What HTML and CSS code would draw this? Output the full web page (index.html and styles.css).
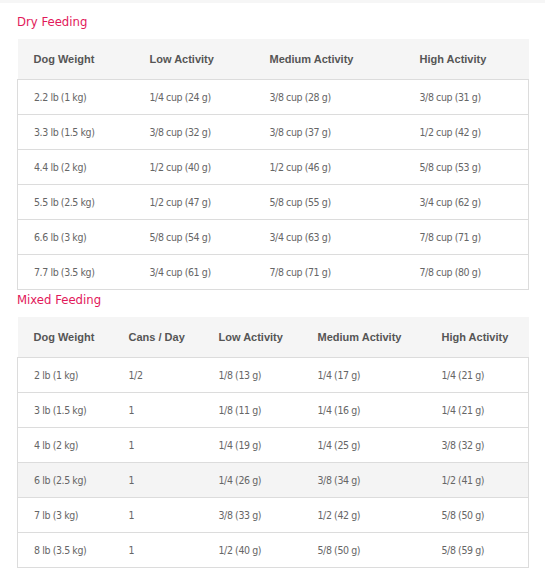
FILE: index.html
```html
<!DOCTYPE html>
<html>
<head>
<meta charset="utf-8">
<link rel="stylesheet" href="styles.css">
</head>
<body>
<div class="topbar"></div>
<div class="content">
  <h2 class="title first">Dry Feeding</h2>
  <table class="feed">
    <colgroup>
      <col class="d1"><col class="d2"><col class="d3"><col class="d4">
    </colgroup>
    <thead>
      <tr><th>Dog Weight</th><th>Low Activity</th><th>Medium Activity</th><th>High Activity</th></tr>
    </thead>
    <tbody>
      <tr><td>2.2 lb (1 kg)</td><td>1/4 cup (24 g)</td><td>3/8 cup (28 g)</td><td>3/8 cup (31 g)</td></tr>
      <tr><td>3.3 lb (1.5 kg)</td><td>3/8 cup (32 g)</td><td>3/8 cup (37 g)</td><td>1/2 cup (42 g)</td></tr>
      <tr><td>4.4 lb (2 kg)</td><td>1/2 cup (40 g)</td><td>1/2 cup (46 g)</td><td>5/8 cup (53 g)</td></tr>
      <tr><td>5.5 lb (2.5 kg)</td><td>1/2 cup (47 g)</td><td>5/8 cup (55 g)</td><td>3/4 cup (62 g)</td></tr>
      <tr><td>6.6 lb (3 kg)</td><td>5/8 cup (54 g)</td><td>3/4 cup (63 g)</td><td>7/8 cup (71 g)</td></tr>
      <tr><td>7.7 lb (3.5 kg)</td><td>3/4 cup (61 g)</td><td>7/8 cup (71 g)</td><td>7/8 cup (80 g)</td></tr>
    </tbody>
  </table>
  <h2 class="title">Mixed Feeding</h2>
  <table class="feed">
    <colgroup>
      <col class="m1"><col class="m2"><col class="m3"><col class="m4"><col class="m5">
    </colgroup>
    <thead>
      <tr><th>Dog Weight</th><th>Cans / Day</th><th>Low Activity</th><th>Medium Activity</th><th>High Activity</th></tr>
    </thead>
    <tbody>
      <tr><td>2 lb (1 kg)</td><td>1/2</td><td>1/8 (13 g)</td><td>1/4 (17 g)</td><td>1/4 (21 g)</td></tr>
      <tr><td>3 lb (1.5 kg)</td><td>1</td><td>1/8 (11 g)</td><td>1/4 (16 g)</td><td>1/4 (21 g)</td></tr>
      <tr><td>4 lb (2 kg)</td><td>1</td><td>1/4 (19 g)</td><td>1/4 (25 g)</td><td>3/8 (32 g)</td></tr>
      <tr class="hover"><td>6 lb (2.5 kg)</td><td>1</td><td>1/4 (26 g)</td><td>3/8 (34 g)</td><td>1/2 (41 g)</td></tr>
      <tr><td>7 lb (3 kg)</td><td>1</td><td>3/8 (33 g)</td><td>1/2 (42 g)</td><td>5/8 (50 g)</td></tr>
      <tr><td>8 lb (3.5 kg)</td><td>1</td><td>1/2 (40 g)</td><td>5/8 (50 g)</td><td>5/8 (59 g)</td></tr>
    </tbody>
  </table>
</div>
</body>
</html>
```
FILE: styles.css
```css
html, body {
  margin: 0;
  padding: 0;
  background: #ffffff;
}

.topbar {
  height: 3px;
  background: #f6f6f6;
}

.content {
  padding: 0 17px;
}

.title {
  margin: 0 0 7px 0;
  font-family: "DejaVu Sans Condensed", "Liberation Sans", sans-serif;
  font-weight: normal;
  font-size: 13px;
  line-height: 20px;
  color: #e2185a;
}

.title.first {
  margin-top: 9px;
}

.feed {
  width: 511px;
  border-collapse: collapse;
  table-layout: fixed;
}

.feed th {
  height: 40px;
  padding: 0 0 0 16px;
  text-align: left;
  background: #f5f5f5;
  border-bottom: 1px solid #dcdcdc;
  font-family: "Liberation Sans", Arial, sans-serif;
  font-weight: bold;
  font-size: 11px;
  color: #555555;
}

.feed td {
  height: 34px;
  padding: 0 0 0 16px;
  border-bottom: 1px solid #dcdcdc;
  font-family: "DejaVu Sans Condensed", "Liberation Sans", sans-serif;
  font-size: 10.5px;
  letter-spacing: -0.4px;
  color: #666666;
}

.feed td:first-child {
  border-left: 1px solid #dcdcdc;
}

.feed td:last-child {
  border-right: 1px solid #dcdcdc;
}

.feed tr.hover td {
  background: #f4f4f4;
}

.d1 { width: 116px; }
.d2 { width: 120px; }
.d3 { width: 150px; }
.d4 { width: 125px; }

.m1 { width: 95px; }
.m2 { width: 90px; }
.m3 { width: 99px; }
.m4 { width: 124px; }
.m5 { width: 103px; }
```
